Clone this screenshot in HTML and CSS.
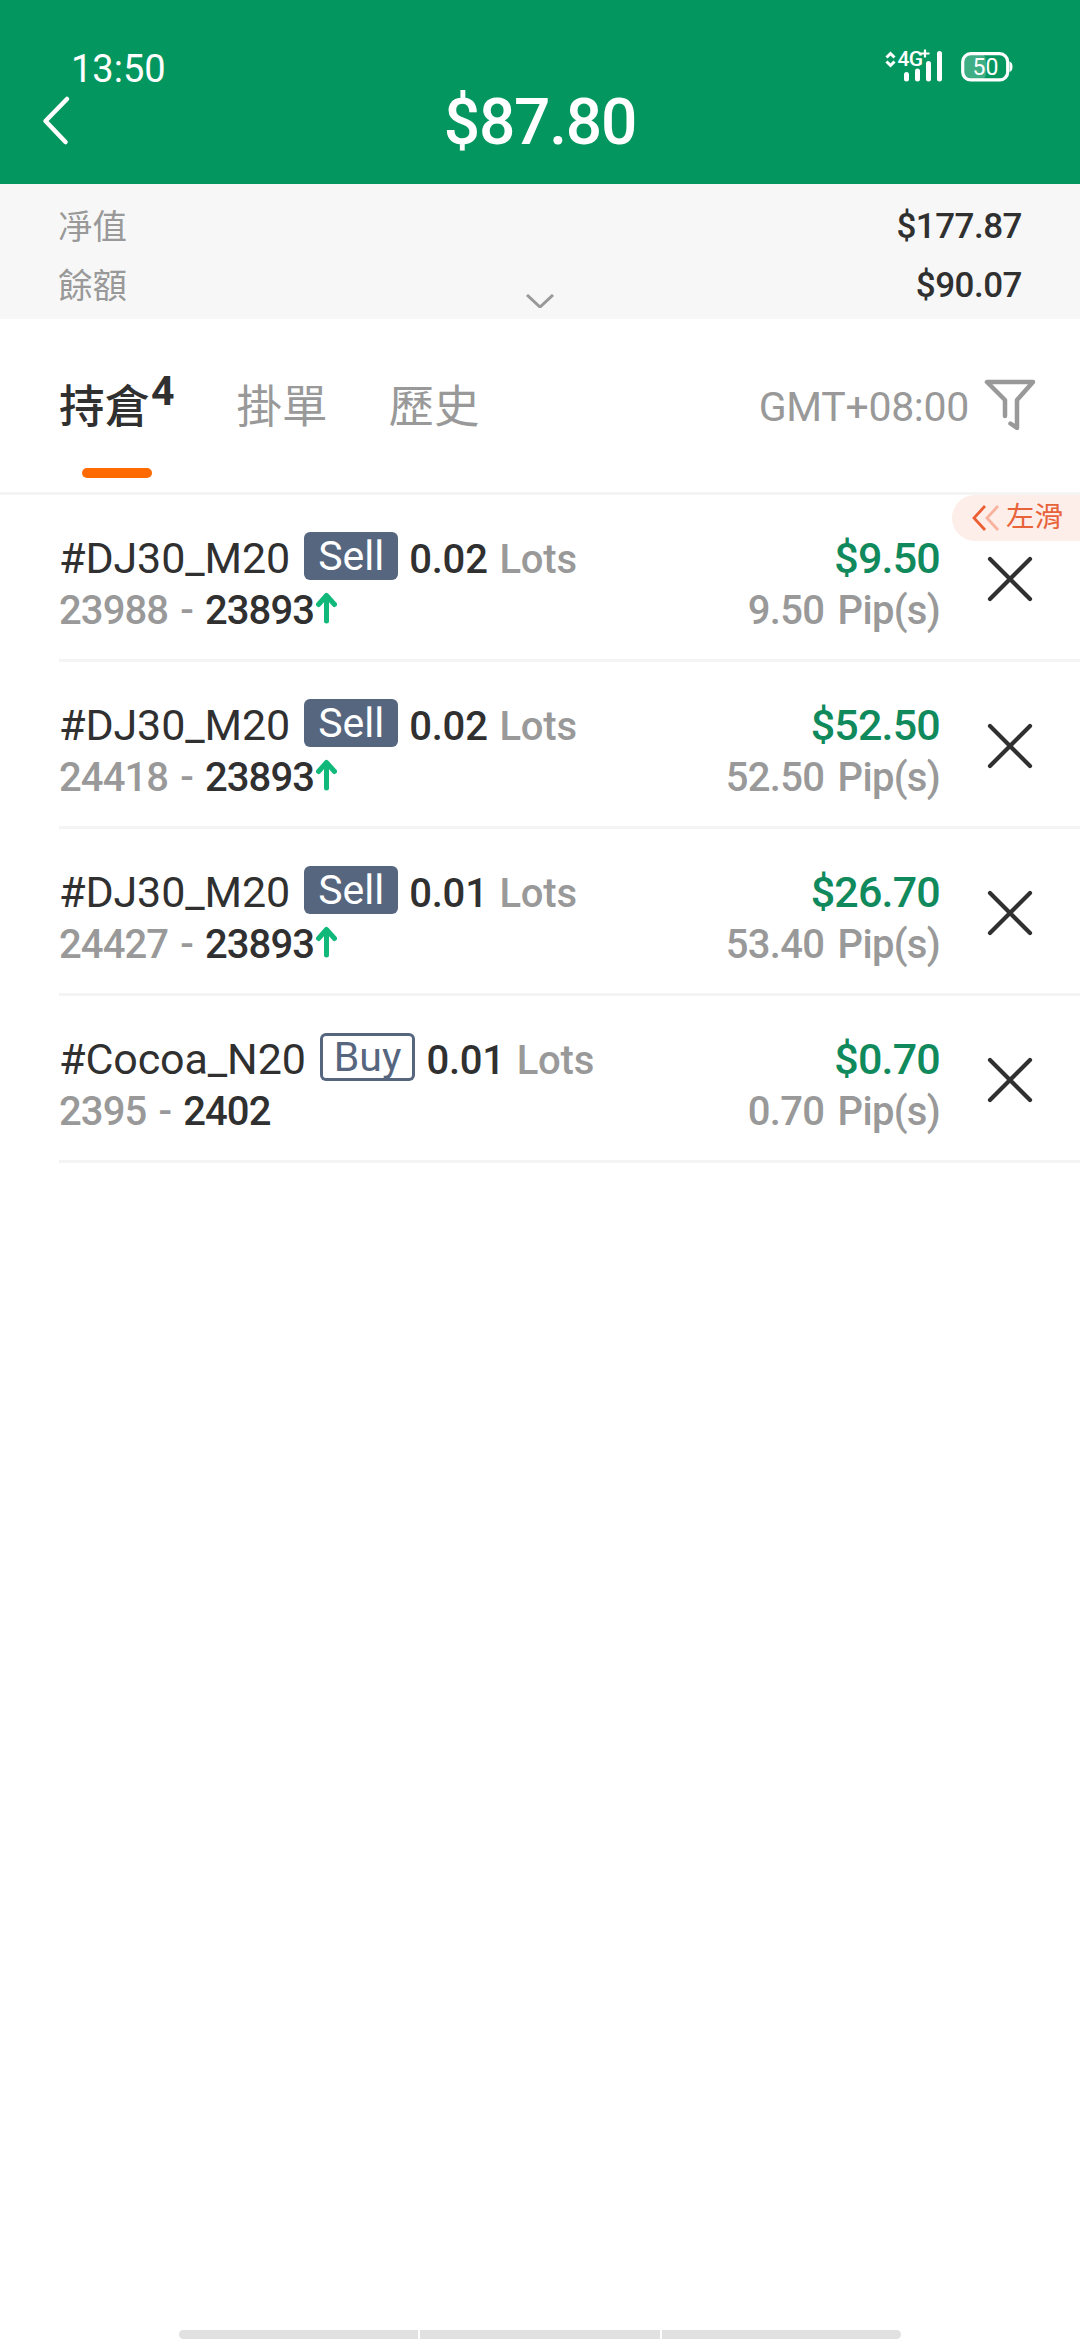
FILE: index.html
```html
<!DOCTYPE html>
<html lang="zh-Hant">
<head>
<meta charset="utf-8">
<title>持倉</title>
<link rel="stylesheet" href="styles.css">
</head>
<body>
<div class="screen">
  <header class="header">
    <div class="status">
      <span class="time">13:50</span>
      <svg class="signal" width="60" height="36" viewBox="884 48 60 36" fill="none" stroke="#fff">
        <path d="M886.500 57.500l4-4 4 4M886.500 61.500l4 4 4-4" stroke-width="3"/>
        <text class="net" x="897.500" y="66">4G</text>
        <path d="M920.500 53.500h9M925 49.500v8" stroke-width="2.200"/>
        <path d="M906.500 74.500v4.500M917.500 71v8M928.500 63.500v15.500M939.500 53.500v25.500" stroke-width="5" stroke-linecap="round"/>
      </svg>
      <svg class="battery" width="52" height="30" viewBox="0 0 52 30">
        <rect x="3" y="2" width="22" height="26" rx="6" fill="#3fae84"/>
        <rect x="1.700" y="1.700" width="45" height="26.200" rx="8" fill="none" stroke="#fff" stroke-width="3.200"/>
        <path d="M48.500 9.500q3 1 3 5.300t-3 5.300z" fill="#fff"/>
        <text class="charge" x="24.500" y="23">50</text>
      </svg>
    </div>
    <div class="titlebar">
      <svg class="back" width="36" height="56" viewBox="0 0 36 56" fill="none" stroke="#fff" stroke-width="4.500" stroke-linecap="round" stroke-linejoin="round"><path d="M28 4L6.500 26L26.500 47"/></svg>
      <h1 class="total">$87.80</h1>
    </div>
  </header>

  <section class="summary">
    <div class="sum-row"><span class="label">凈值</span><span class="amount">$177.87</span></div>
    <div class="sum-row"><span class="label">餘額</span><span class="amount">$90.07</span></div>
    <svg class="expand" width="30" height="14" viewBox="0 0 30 14" fill="none" stroke="#999" stroke-width="3"><path d="M2 1L15 13L28 1"/></svg>
  </section>

  <nav class="tabs">
    <div class="tab active">持倉<span class="count">4</span></div>
    <div class="tab">掛單</div>
    <div class="tab">歷史</div>
    <span class="zone">GMT+08:00</span>
    <svg class="filter" width="54" height="54" viewBox="0 0 54 54" fill="none" stroke="#999" stroke-width="4.500" stroke-linecap="round" stroke-linejoin="round"><path d="M22 38V22L4 4H50L34 22V50L27.500 45.500"/></svg>
  </nav>

  <main class="list">
    <div class="hint">
      <svg width="30" height="28" viewBox="0 0 30 28" fill="none" stroke-width="2.800"><path d="M28 2L17 14L28 26" stroke="#f8b29d"/><path d="M15 2L4 14L15 26" stroke="#ec5f35"/></svg>
      <span>左滑</span>
    </div>

    <article class="row">
      <div class="left">
        <div class="line1"><span class="symbol">#DJ30_M20</span><span class="side sell">Sell</span><span class="lots"><b>0.02</b> Lots</span></div>
        <div class="line2"><span class="open">23988 - </span><b>23893</b><svg class="up" width="21" height="32" viewBox="0 0 21 32"><path d="M10.500 29V4M2.500 12.500L10.500 3.500L18.500 12.500"/></svg></div>
      </div>
      <div class="right"><div class="profit">$9.50</div><div class="pips">9.50 Pip(s)</div></div>
      <svg class="close" width="48" height="48" viewBox="0 0 48 48"><path d="M4 4L44 44M44 4L4 44"/></svg>
    </article>

    <article class="row">
      <div class="left">
        <div class="line1"><span class="symbol">#DJ30_M20</span><span class="side sell">Sell</span><span class="lots"><b>0.02</b> Lots</span></div>
        <div class="line2"><span class="open">24418 - </span><b>23893</b><svg class="up" width="21" height="32" viewBox="0 0 21 32"><path d="M10.500 29V4M2.500 12.500L10.500 3.500L18.500 12.500"/></svg></div>
      </div>
      <div class="right"><div class="profit">$52.50</div><div class="pips">52.50 Pip(s)</div></div>
      <svg class="close" width="48" height="48" viewBox="0 0 48 48"><path d="M4 4L44 44M44 4L4 44"/></svg>
    </article>

    <article class="row">
      <div class="left">
        <div class="line1"><span class="symbol">#DJ30_M20</span><span class="side sell">Sell</span><span class="lots"><b>0.01</b> Lots</span></div>
        <div class="line2"><span class="open">24427 - </span><b>23893</b><svg class="up" width="21" height="32" viewBox="0 0 21 32"><path d="M10.500 29V4M2.500 12.500L10.500 3.500L18.500 12.500"/></svg></div>
      </div>
      <div class="right"><div class="profit">$26.70</div><div class="pips">53.40 Pip(s)</div></div>
      <svg class="close" width="48" height="48" viewBox="0 0 48 48"><path d="M4 4L44 44M44 4L4 44"/></svg>
    </article>

    <article class="row">
      <div class="left">
        <div class="line1"><span class="symbol">#Cocoa_N20</span><span class="side buy">Buy</span><span class="lots"><b>0.01</b> Lots</span></div>
        <div class="line2"><span class="open">2395 - </span><b>2402</b></div>
      </div>
      <div class="right"><div class="profit">$0.70</div><div class="pips">0.70 Pip(s)</div></div>
      <svg class="close" width="48" height="48" viewBox="0 0 48 48"><path d="M4 4L44 44M44 4L4 44"/></svg>
    </article>
  </main>

  <footer class="gesture"><i></i><i></i><i></i></footer>
</div>
</body>
</html>
```
FILE: styles.css
```css
* { box-sizing: border-box; }
body {
  margin: 0;
  background: #fff;
  color: #303030;
  font-family: Roboto, "Noto Sans CJK TC", sans-serif;
}
svg { display: block; flex: none; }
.screen {
  width: 1080px;
  height: 2340px;
  display: flex;
  flex-direction: column;
  overflow: hidden;
}

/* header */
.header { height: 184px; background: #03965f; color: #fff; }
.status {
  display: flex;
  align-items: flex-start;
  padding: 48px 67px 0 71px;
  height: 92px;
}
.time { font-size: 38px; line-height: 42px; margin-right: auto; }
.signal { margin-right: 17px; }
.battery { margin-top: 4px; }
.net { font-size: 21px; font-weight: 500; fill: #fff; stroke: none; letter-spacing: -0.8px; }
.charge { font-size: 23px; fill: #fff; text-anchor: middle; }
.titlebar {
  height: 62px;
  display: grid;
  grid-template-columns: 80px 1fr 80px;
  align-items: center;
}
.back { margin-left: 39px; }
.total {
  margin: 0;
  text-align: center;
  font-size: 64px;
  font-weight: 500;
  line-height: 62px;
  letter-spacing: -1.2px;
}

/* account summary */
.summary {
  height: 135px;
  background: #f7f7f7;
  padding: 13px 58px 0 58px;
  position: relative;
}
.sum-row {
  height: 59px;
  display: flex;
  justify-content: space-between;
  align-items: center;
  line-height: 58px;
}
.label { font-size: 34.5px; color: #999; }
.amount { font-size: 35px; font-weight: 500; letter-spacing: -0.5px; }
.expand { position: absolute; left: 525px; top: 110px; }

/* tabs */
.tabs {
  height: 176px;
  border-bottom: 3px solid #f4f4f4;
  display: flex;
  align-items: center;
  padding: 0 43px 0 59px;
}
.tab {
  display: flex;
  align-items: center;
  height: 173px;
  margin-right: 61px;
  padding-top: 5px;
  font-size: 45.5px;
  line-height: 60px;
  color: #999;
  position: relative;
}
.tab.active { color: #303030; font-weight: 500; margin-right: 60px; }
.tab.active::after {
  content: "";
  position: absolute;
  left: 23px;
  top: 149px;
  width: 70px;
  height: 10px;
  border-radius: 5px;
  background: #ff6a00;
}
.count { font-size: 41px; font-weight: 700; line-height: 40px; padding: 0 2px 0 1px; margin-top: -35px; }
.zone { font-size: 41px; letter-spacing: -0.3px; color: #999; margin-left: auto; margin-right: 14px; padding-top: 2px; }
.filter { margin-top: -2px; }

/* positions */
.list { position: relative; flex: 1; }
.hint {
  position: absolute;
  right: 0;
  top: 0;
  width: 128px;
  height: 46px;
  border-radius: 23px 0 0 23px;
  background: #fdeeea;
  color: #e8623a;
  font-size: 28.5px;
  line-height: 48px;
  display: flex;
  align-items: center;
  gap: 6px;
  padding-left: 18px;
}
.row {
  margin-left: 59px;
  height: 167px;
  border-bottom: 3px solid #f4f4f4;
  display: flex;
  padding: 37px 46px 0 0;
}
.left { flex: 1; }
b { color: #303030; font-weight: 500; }
.line1 { display: flex; align-items: center; height: 48px; }
.symbol { font-size: 43px; letter-spacing: -0.1px; line-height: 48px; padding-top: 4px; margin-right: 14px; }
.side {
  height: 48px;
  font-size: 41px;
  line-height: 48px;
  padding: 0 14px;
  border-radius: 6px;
}
.sell { background: #56667f; color: #fff; }
.buy { color: #56667f; box-shadow: inset 0 0 0 3px #56667f; }
.lots {
  font-size: 40px;
  font-weight: 500;
  color: #999;
  line-height: 48px;
  padding-top: 7px;
  margin-left: 11px;
  word-spacing: 2px;
  letter-spacing: -0.2px;
}
.line2 {
  display: flex;
  align-items: center;
  height: 62px;
  font-size: 40px;
  font-weight: 500;
  line-height: 62px;
  color: #999;
  white-space: pre;
  letter-spacing: -0.9px;
}
.open { word-spacing: 3px; }
.up { fill: none; stroke: #10b97a; stroke-width: 5; stroke-linecap: round; stroke-linejoin: round; margin: -6px 0 0 2px; }
.right { text-align: right; }
.profit { font-size: 43px; font-weight: 500; line-height: 46px; height: 48px; padding-top: 3px; color: #108a5c; letter-spacing: -0.8px; }
.pips { font-size: 40px; font-weight: 500; line-height: 62px; color: #999; letter-spacing: -0.7px; word-spacing: 4px; }
.close { margin: 23px 0 0 46px; fill: none; stroke: #303030; stroke-width: 4.2; stroke-linecap: round; }

/* gesture bar */
.gesture { display: flex; gap: 2px; width: 722px; margin: 0 auto 1px 179px; }
.gesture i { flex: 1; height: 9px; background: #e1e1e1; }
.gesture i:first-child { border-radius: 5px 0 0 5px; }
.gesture i:last-child { border-radius: 0 5px 5px 0; }
```
